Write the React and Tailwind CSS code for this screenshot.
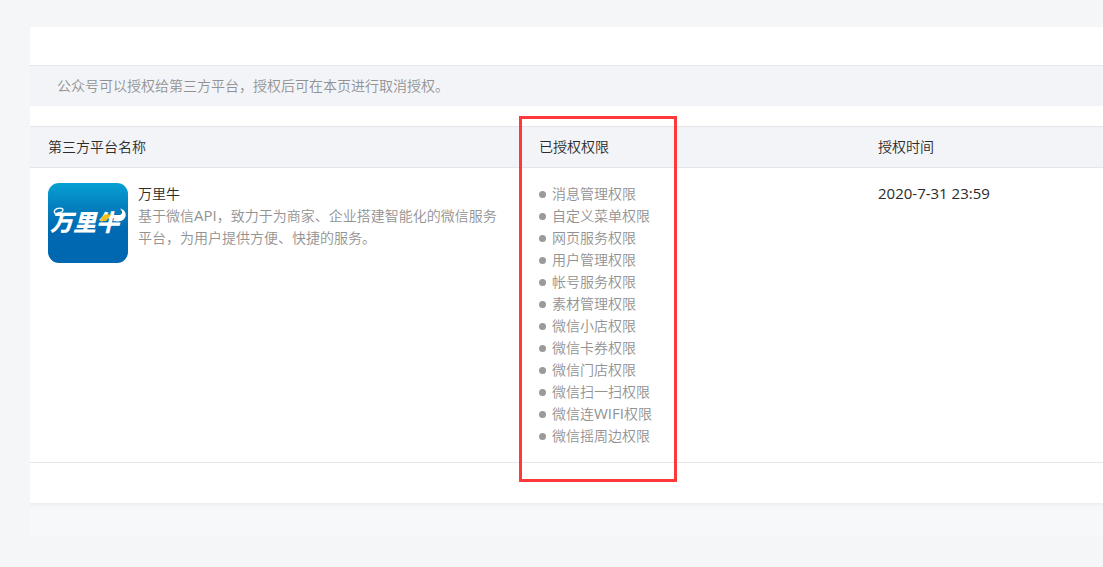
import React from "react";

const permissions = [
  ["消息管理权限"],
  ["自定义菜单权限"],
  ["网页服务权限"],
  ["用户管理权限"],
  ["帐号服务权限"],
  ["素材管理权限"],
  ["微信小店权限"],
  ["微信卡券权限"],
  ["微信门店权限"],
  ["微信扫一扫权限"],
  ["微信连", "WIFI", "权限"],
  ["微信摇周边权限"],
];

function Latin({ children }) {
  return <span className="text-[15px] leading-none font-normal">{children}</span>;
}

function Logo() {
  return (
    <svg viewBox="0 0 80 80" className="h-20 w-20 shrink-0" role="img" aria-label="万里牛">
      <defs>
        <linearGradient id="logo-bg" x1="0" y1="0" x2="0" y2="1">
          <stop offset="0" stopColor="#05a0d3" />
          <stop offset="0.3" stopColor="#047fbd" />
          <stop offset="0.6" stopColor="#0069b2" />
          <stop offset="1" stopColor="#0067b1" />
        </linearGradient>
      </defs>
      <rect width="80" height="80" rx="11" fill="url(#logo-bg)" />
      <text
        x="2"
        y="48"
        fontSize="23"
        fontWeight="900"
        fontStyle="italic"
        fill="#fff"
        fontFamily="'Noto Sans CJK SC', sans-serif"
      >
        万里牛
      </text>
      <path
        d="M17 32.500C11 32.500 6 31.500 6.300 28.500C6.700 25.500 12.500 24 14.800 26C16 28 13 30 10 30"
        fill="none"
        stroke="#fff"
        strokeWidth="1.300"
        strokeLinecap="round"
      />
      <path d="M56 31.500H63.500L58 38H51.500Z" fill="#f9be1a" />
      <path
        d="M66 35.500L69 32.500C74 32.500 76 29.500 72 25.500C78 27 79.500 33 75.500 36.500C72.500 39 69 38.500 65 38Z"
        fill="#fff"
      />
    </svg>
  );
}

export default function App() {
  return (
    <div className="min-h-screen bg-[#f4f6f8] pt-[27px] pb-[30px] pl-[30px] font-['Open_Sans','Noto_Sans_CJK_SC',sans-serif] text-sm leading-[22px] font-[350] text-[#2b2b2b]">
      <main className="bg-[#f7f8fa] pb-[30px]">
        <section className="bg-white pt-[38px] pb-10">
          <p className="mb-5 border-t border-[#e4e5e8] bg-[#f3f4f8] px-[27px] py-[9px] text-[#929292]">
            公众号可以授权给第三方平台，授权后可在本页进行取消授权。
          </p>
          <div className="relative">
            <table className="w-full table-fixed border-collapse text-left">
              <colgroup>
                <col className="w-[491px]" />
                <col className="w-[339px]" />
                <col />
              </colgroup>
              <thead>
                <tr className="border-y border-[#e4e5e8] bg-[#f3f4f8]">
                  <th scope="col" className="px-[18px] py-[9px] font-[350]">第三方平台名称</th>
                  <th scope="col" className="px-[18px] py-[9px] font-[350]">已授权权限</th>
                  <th scope="col" className="px-[18px] py-[9px] font-[350]">授权时间</th>
                </tr>
              </thead>
              <tbody>
                <tr className="border-b border-[#e7e7eb] align-top">
                  <td className="px-[18px] py-[15px]">
                    <div className="flex gap-2.5">
                      <Logo />
                      <div>
                        <h2>万里牛</h2>
                        <p className="text-[#929292]">
                          基于微信<Latin>API</Latin>，致力于为商家、企业搭建智能化的微信服务平台，为用户提供方便、快捷的服务。
                        </p>
                      </div>
                    </div>
                  </td>
                  <td className="px-[18px] py-[15px]">
                    <ul className="text-[#929292]">
                      {permissions.map(([head, latin, tail]) => (
                        <li key={head} className="flex items-center gap-1.5">
                          <span className="h-[7px] w-[7px] rounded-full bg-[#9a9a9a]" />
                          <span>
                            {head}
                            {latin && <Latin>{latin}</Latin>}
                            {tail}
                          </span>
                        </li>
                      ))}
                    </ul>
                  </td>
                  <td className="px-[18px] py-[15px]">
                    <Latin>2020-7-31 23:59</Latin>
                  </td>
                </tr>
              </tbody>
            </table>
            <div className="pointer-events-none absolute -top-2.5 -bottom-[19px] left-[489px] w-[158px] border-3 border-[#fd3939]" />
          </div>
        </section>
        <div className="h-1 bg-linear-to-b from-[#ecedef] to-[#f7f8fa]" />
      </main>
    </div>
  );
}
